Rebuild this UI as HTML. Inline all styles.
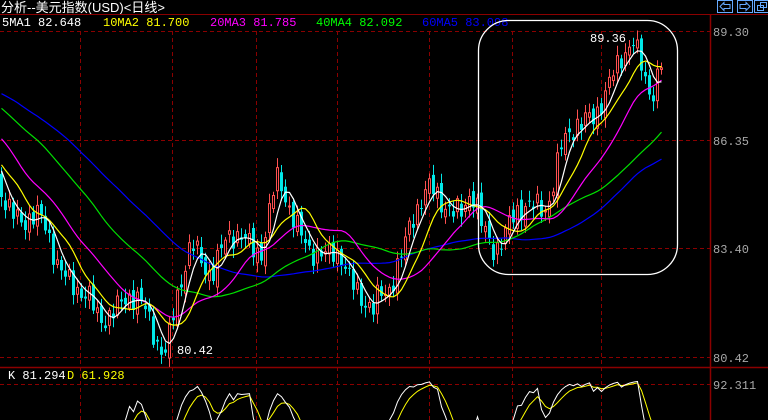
<!DOCTYPE html>
<html><head><meta charset="utf-8"><style>
html,body{margin:0;padding:0;background:#000;width:768px;height:420px;overflow:hidden}
svg{display:block;overflow:hidden}
text{font-family:"Liberation Mono","WenQuanYi Zen Hei",monospace;font-size:12px}
</style></head><body>
<svg id="s" width="768" height="420" viewBox="0 0 768 420" xmlns="http://www.w3.org/2000/svg">
<rect width="768" height="420" fill="#000"/>
<text x="1" y="12" fill="#fff" style='font-family:"Liberation Sans","WenQuanYi Zen Hei",sans-serif;font-size:13px'>分析--美元指数(USD)&lt;日线&gt;</text>
<line x1="0" y1="14.5" x2="768" y2="14.5" stroke="#8b0000"/>
<line x1="710.5" y1="14" x2="710.5" y2="420" stroke="#8b0000" stroke-width="1.5"/>
<line x1="0" y1="367.5" x2="768" y2="367.5" stroke="#8b0000" stroke-width="1.5"/>
<text x="2" y="26" fill="#fff">5MA1 82.648</text>
<text x="103" y="26" fill="#ff0">10MA2 81.700</text>
<text x="210" y="26" fill="#f0f">20MA3 81.785</text>
<text x="316" y="26" fill="#0f0">40MA4 82.092</text>
<text x="422" y="26" fill="#00f">60MA5 83.098</text>
<g stroke="#8b0000" stroke-dasharray="4,3" fill="none">
<line x1="0" y1="31.5" x2="710" y2="31.5"/><line x1="0" y1="140.5" x2="710" y2="140.5"/>
<line x1="0" y1="248.5" x2="710" y2="248.5"/><line x1="0" y1="357.5" x2="710" y2="357.5"/>
<line x1="0" y1="384.5" x2="710" y2="384.5"/>
<g id="vl"></g></g>
<g fill="#a8a8a8"><text x="713" y="36">89.30</text><text x="713" y="145">86.35</text><text x="713" y="253">83.40</text><text x="713" y="362">80.42</text><text x="713" y="389">92.311</text></g>
<text x="8" y="379" fill="#fff">K 81.294</text><text x="67" y="379" fill="#ff0">D 61.928</text>
<g stroke="#6af" fill="none"><rect x="717.5" y="0.5" width="15" height="12"/><rect x="737.5" y="0.5" width="15" height="12"/><rect x="754.5" y="0.5" width="14" height="12"/>
<path d="M720 6.5l4-4v2h6v4h-6v2z M750 6.5l-4-4v2h-6v4h6v2z"/><rect x="757.5" y="5.5" width="6" height="5"/><rect x="760.5" y="2.5" width="6" height="5"/></g>
<g id="c"></g>
<rect x="478.5" y="20.5" width="199" height="254" rx="30" fill="none" stroke="#fff" stroke-width="1.3"/>
<text x="590" y="42" fill="#fff">89.36</text><text x="177" y="354" fill="#fff">80.42</text>
</svg>
<script>
var ns="http://www.w3.org/2000/svg",g=document.getElementById('c');
function el(t,a,p){var e=document.createElementNS(ns,t);for(var k in a)e.setAttribute(k,a[k]);(p||g).appendChild(e);return e}
[80,172,256,337,429,512,601].forEach(function(x){el('line',{x1:x+.5,y1:31,x2:x+.5,y2:420},document.getElementById('vl'))});
var K=[[-240,60],[-120,70],[-60,110],[0,190],[20,215],[50,240],[80,300],[95,320],[110,300],[130,305],[150,320],[165,345],[180,290],[190,250],[210,260],[240,240],[260,240],[275,190],[290,215],[310,240],[325,270],[340,255],[360,290],[372,318],[385,300],[395,260],[410,215],[430,200],[445,195],[460,210],[470,200],[480,235],[490,240],[510,220],[530,215],[545,195],[560,150],[580,130],[600,90],[615,80],[632,42],[642,62],[650,85],[660,70]];
function f(x){for(var i=1;i<K.length;i++)if(x<=K[i][0]){var a=K[i-1],b=K[i];return a[1]+(b[1]-a[1])*(x-a[0])/(b[0]-a[0])}return 70}
var ys=[],xs=[];
for(var x=-240;x<=660;x+=4){var n=Math.sin(x*1.7)*12+Math.sin(x*0.63)*9+Math.cos(x*2.9)*7;xs.push(x);ys.push(f(x)+n)}
var o=[],c=ys;
for(var i=0;i<c.length;i++){o.push(i?c[i-1]+Math.sin(i*3.1)*6:c[i])}
for(var i=0;i<c.length;i++){var x=xs[i];if(x<0)continue;var up=c[i]<o[i],t=Math.min(o[i],c[i]),b=Math.max(o[i],c[i]),h=Math.max(b-t,1);
var hi=t-3-Math.abs(Math.sin(i*1.3))*7,lo=b+3+Math.abs(Math.cos(i*2.1))*7;
el('line',{x1:x+1.5,y1:hi,x2:x+1.5,y2:lo,stroke:up?'#ff5050':'#00e8e8'});
el('rect',{x:up?x+.5:x,y:t,width:up?2:3,height:h,fill:up?'#000':'#00e8e8',stroke:up?'#ff5050':'none'})}
function ma(n,col){var p=[];for(var i=0;i<c.length;i++){if(xs[i]<0||i<n)continue;var s=0;for(var j=0;j<n;j++)s+=c[i-j];p.push((xs[i]+1.5)+','+(s/n).toFixed(1))}el('polyline',{points:p.join(' '),fill:'none',stroke:col,'stroke-width':1.2})}
ma(60,'#0000ff');ma(40,'#00e000');ma(20,'#ff00ff');ma(10,'#ffff00');ma(5,'#ffffff');
var kv=50,dv=50,pk=[],pd=[];
for(var i=0;i<c.length;i++){var lo=-1e9,hi=1e9;for(var j=Math.max(0,i-8);j<=i;j++){lo=Math.max(lo,c[j]);hi=Math.min(hi,c[j])}
var rsv=lo==hi?50:(lo-c[i])/(lo-hi)*100;kv=kv*2/3+rsv/3;dv=dv*2/3+kv/3;
if(xs[i]>=0){pk.push((xs[i]+1.5)+','+Math.min(430,380+(100-kv)*0.9).toFixed(1));pd.push((xs[i]+1.5)+','+Math.min(430,380+(100-dv)*0.9).toFixed(1))}}
el('polyline',{points:pd.join(' '),fill:'none',stroke:'#ff0'});
el('polyline',{points:pk.join(' '),fill:'none',stroke:'#fff'});
</script>
</body></html>
